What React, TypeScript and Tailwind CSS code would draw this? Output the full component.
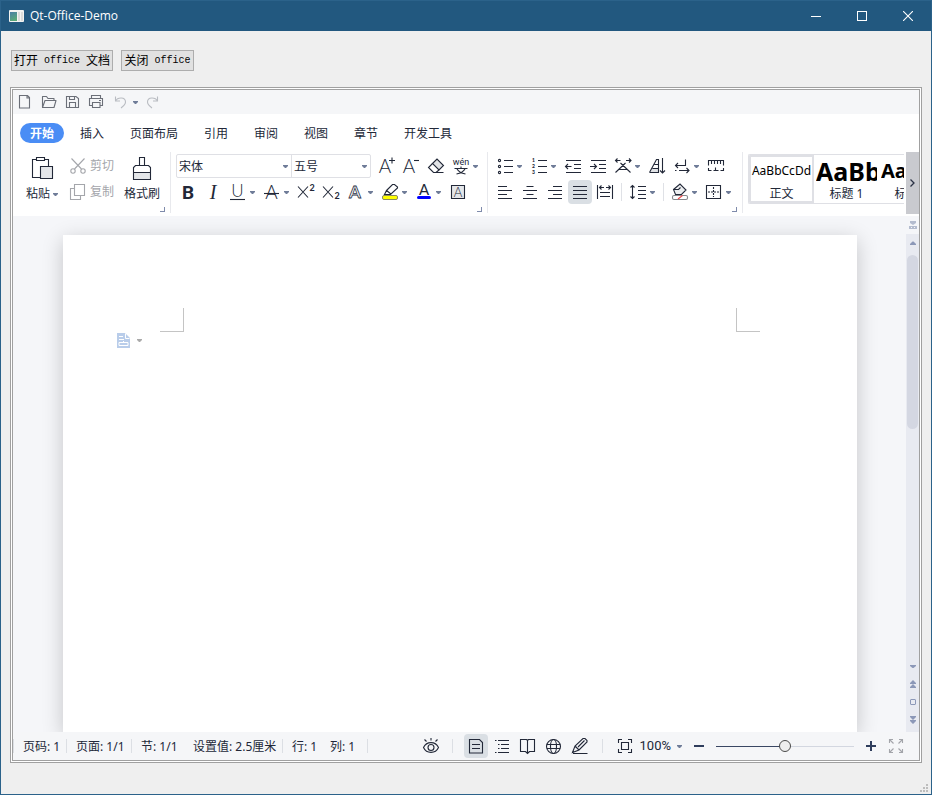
import type { ReactNode } from "react";

const INK = "#2b3245";

function Svg({ children, className = "size-6" }: { children: ReactNode; className?: string }) {
  return (
    <svg viewBox="0 0 24 24" className={`${className} shrink-0`} fill="none" stroke="currentColor" strokeWidth="1.1" aria-hidden="true">
      {children}
    </svg>
  );
}

function Caret({ className = "text-[#6f7c98]" }: { className?: string }) {
  return (
    <svg viewBox="0 0 5 3" className={`h-[3px] w-[5px] shrink-0 ${className}`} fill="currentColor" aria-hidden="true">
      <path d="M0 0h5v1L3 3H2L0 1z" />
    </svg>
  );
}

type ToolProps = { label: string; children: ReactNode; drop?: boolean; active?: boolean };

function Tool({ label, children, drop, active }: ToolProps) {
  return (
    <button
      type="button"
      aria-label={label}
      title={label}
      className={`flex h-6 shrink-0 items-center ${drop ? "w-[33px]" : "w-6"} ${active ? "rounded-sm bg-[#dadfe4]" : ""}`}
    >
      <Svg>{children}</Svg>
      {drop && <Caret />}
    </button>
  );
}

function Letter({ x, y, size, children, weight = 300, family = "Lato, sans-serif" }: {
  x: number; y: number; size: number; children: string; weight?: number; family?: string;
}) {
  return (
    <text x={x} y={y} fontSize={size} fontWeight={weight} fontFamily={family} fill="currentColor" stroke="none" textAnchor="middle">
      {children}
    </text>
  );
}

function Group({ children, className = "" }: { children: ReactNode; className?: string }) {
  return (
    <section className={`relative h-[61px] shrink-0 border-r border-[#e8e9ed] ${className}`}>
      {children}
      <button type="button" aria-label="更多设置" className="absolute right-[5px] bottom-px size-[5px] border-r border-b border-[#7f8bab]" />
    </section>
  );
}

function Combo({ label, options, className }: { label: string; options: string[]; className: string }) {
  return (
    <span className={`relative flex items-center ${className}`}>
      <select aria-label={label} className="h-full w-full appearance-none bg-transparent pt-px pl-0.5 text-xs outline-none">
        {options.map((o) => (
          <option key={o}>{o}</option>
        ))}
      </select>
      <span className="pointer-events-none absolute right-[3px]">
        <Caret />
      </span>
    </span>
  );
}

const Divider = () => <span className="mx-[3px] h-[18px] w-px shrink-0 bg-[#dfe1e6]" />;

function TitleBar() {
  return (
    <header className="flex h-[30px] shrink-0 items-center bg-[#22587f] text-white">
      <svg viewBox="0 0 15 12" className="ml-2 h-3 w-[15px]" aria-hidden="true">
        <defs>
          <linearGradient id="appIcon" x1="0" y1="0" x2="0.4" y2="1">
            <stop offset="0" stopColor="#4a7fa5" />
            <stop offset="1" stopColor="#58a878" />
          </linearGradient>
        </defs>
        <rect width="15" height="12" rx="1" fill="#f3f3f1" />
        <rect x="1" y="2" width="7" height="9" fill="url(#appIcon)" />
        <rect x="9" y="2" width="2" height="9" fill="#dcdcda" />
        <rect x="12" y="2" width="2" height="9" fill="#dcdcda" />
      </svg>
      <h1 className="ml-1.5 flex-1 font-['Open_Sans','Noto_Sans',sans-serif] text-xs">Qt-Office-Demo</h1>
      <button type="button" aria-label="最小化" className="flex h-full w-[46px] items-center justify-center">
        <span className="h-px w-2.5 bg-white" />
      </button>
      <button type="button" aria-label="最大化" className="flex h-full w-[46px] items-center justify-center">
        <span className="size-2.5 border border-white" />
      </button>
      <button type="button" aria-label="关闭" className="flex h-full w-[46px] items-center justify-center">
        <svg viewBox="0 0 10 10" className="size-2.5" stroke="white" strokeWidth="1.1" aria-hidden="true">
          <path d="M0 0l10 10M10 0L0 10" />
        </svg>
      </button>
    </header>
  );
}

const latin = "font-['Liberation_Mono',monospace] text-[10px]";

function DemoButtons() {
  const cls = "flex h-[21px] items-center justify-center whitespace-pre border border-[#adadad] bg-[#e1e1e1] pt-px text-xs text-black";
  return (
    <div className="mt-[19px] flex gap-2 px-px">
      <button type="button" className={`${cls} w-[102px]`}>
        打开<span className={latin}> office </span>文档
      </button>
      <button type="button" className={`${cls} w-[73px]`}>
        关闭<span className={latin}> office</span>
      </button>
    </div>
  );
}

function QuickAccess() {
  return (
    <div className="flex h-6 shrink-0 items-center bg-[#f5f6f8] text-[#6b6f78]">
      <Tool label="新建">
        <path d="M6.500 5.500h8l2 2v10.500h-10zM14 5.500v2.500h2.500" />
      </Tool>
      <Tool label="打开">
        <path d="M5.500 17.500v-11h4l1.500 2h6v2M5.500 17.500l2.500-7h11l-2 7z" strokeLinejoin="round" />
      </Tool>
      <Tool label="保存">
        <path d="M5.500 6.500h9.500l2.500 2v9h-12zM8.500 17.500v-5h6v5M8.500 6.500v3h5v-3" />
      </Tool>
      <Tool label="打印">
        <path d="M6.500 8.500v-3h9v3M7 15.500h-2.500v-7h13v7h-2.500M7.500 12.500h7.500v5h-7.500zM14 10.500h2" />
      </Tool>
      <span className="flex text-[#b9bcc2]">
        <Tool label="撤销" drop>
          <path d="M6.500 6.500v4.500h4.500M6.500 11c2-4 10-4.500 10 1 0 2.500-2 4-4.500 6" />
        </Tool>
        <Tool label="恢复">
          <path d="M15.500 6.500v4.500h-4.500M15.500 11c-2-4-10-4.500-10 1 0 2.500 2 4 4.500 6" />
        </Tool>
      </span>
    </div>
  );
}

const tabs = ["开始", "插入", "页面布局", "引用", "审阅", "视图", "章节", "开发工具"];

function Tabs() {
  return (
    <nav role="tablist" className="flex h-[38px] shrink-0 items-center gap-1.5 pl-[7px]">
      {tabs.map((t, i) => (
        <button
          key={t}
          type="button"
          role="tab"
          aria-selected={i === 0}
          className={`h-5 shrink-0 rounded-full px-2.5 pt-0.5 leading-4 ${i === 0 ? "bg-[#4a8df5] font-bold text-white" : ""}`}
        >
          {t}
        </button>
      ))}
    </nav>
  );
}

function Clipboard() {
  return (
    <Group className="flex w-[158px] gap-1 pl-[9px]">
      <button type="button" className="flex w-10 flex-col items-center pt-1">
        <Svg>
          <path d="M6.500 3.500h-4v18h8M14.500 3.500h4v7" />
          <path d="M6.500 1.500h8v3h-8z" />
          <path d="M10.500 10.500h12v12h-12z" fill="#e4e6e9" />
        </Svg>
        <span className="mt-1.5 flex h-4 items-center gap-[3px]">
          粘贴
          <Caret />
        </span>
      </button>
      <div className="flex w-[52px] flex-col gap-0.5 pt-0.5 text-[#a4a6ab]">
        <button type="button" className="flex h-6 items-center">
          <Svg>
            <path d="M5.500 4.500l10 10.500M18.500 4.500l-10 10.500" />
            <circle cx="7" cy="17" r="2.200" />
            <circle cx="17" cy="17" r="2.200" />
          </Svg>
          剪切
        </button>
        <button type="button" className="flex h-6 items-center">
          <Svg>
            <path d="M8.500 4.500h10v11h-10zM8.500 8.500h-4v11h10v-4" />
          </Svg>
          复制
        </button>
      </div>
      <button type="button" className="flex w-10 flex-col items-center pt-1">
        <Svg>
          <path d="M3.500 16.500h17v7h-17z" fill="#e4e6e9" stroke="none" />
          <path d="M9.500 9.500v-8h5v8M3.500 23.500v-12l2-2h13l2 2v12zM3.500 16.500h17" />
        </Svg>
        <span className="mt-1.5 flex h-4 items-center whitespace-nowrap">格式刷</span>
      </button>
    </Group>
  );
}

function FontGroup() {
  return (
    <Group className="flex w-[317px] flex-col gap-0.5 pt-0.5 pl-[5px]">
      <div className="flex gap-px">
        <div className="mr-0.5 flex h-6 w-[195px] rounded-xs border border-[#dfe0e5]">
          <Combo label="字体" options={["宋体", "黑体", "楷体"]} className="w-[115px] border-r border-[#dfe0e5]" />
          <Combo label="字号" options={["五号", "四号", "小四"]} className="w-[78px]" />
        </div>
        <Tool label="增大字号">
          <Letter x={11} y={19} size={19}>A</Letter>
          <path d="M15 6.500h6M18 3.500v6" />
        </Tool>
        <Tool label="减小字号">
          <Letter x={10} y={19} size={19}>A</Letter>
          <path d="M15 6.500h5" />
        </Tool>
        <Tool label="清除格式">
          <path d="M8.500 9.500l4.500-4.500 6.500 6.500-4.500 4.500z" fill="#e1e3e6" />
          <path d="M8.500 9.500l-4 4 5 5h2.500l3-2.500M9.500 18.500h10" />
        </Tool>
        <Tool label="拼音指南" drop>
          <Letter x={12} y={11} size={9} weight={400} family="Roboto, sans-serif">wén</Letter>
          <path d="M5.500 14.500h13M12 12.500v2M8 15c1.500 2.500 4 4 8.500 5M16 15c-1.500 2.500-4 4-8.500 5" />
        </Tool>
      </div>
      <div className="flex gap-px">
        <Tool label="加粗">
          <Letter x={12} y={19} size={19} weight={700} family="Roboto, sans-serif">B</Letter>
        </Tool>
        <Tool label="倾斜">
          <text x="12" y="19" fontSize="20" fontStyle="italic" fontFamily="'Liberation Serif', serif" fill="currentColor" stroke="none" textAnchor="middle">I</text>
        </Tool>
        <Tool label="下划线" drop>
          <Letter x={11.500} y={17} size={17}>U</Letter>
          <path d="M4 19.500h15" />
        </Tool>
        <Tool label="删除线" drop>
          <Letter x={11.500} y={19} size={19}>A</Letter>
          <path d="M4 13.500h15" />
        </Tool>
        <Tool label="上标">
          <path d="M4 6.500l10 11M14 6.500l-10 11" />
          <Letter x={18} y={11} size={9} weight={700}>2</Letter>
        </Tool>
        <Tool label="下标">
          <path d="M4 6.500l10 11M14 6.500l-10 11" />
          <Letter x={18} y={19} size={9} weight={700}>2</Letter>
        </Tool>
        <Tool label="文字效果" drop>
          <text x="11" y="18" fontSize="17" fontWeight="700" fontFamily="Lato, sans-serif" fill="#ffffff" stroke={INK} strokeWidth="0.8" textAnchor="middle">A</text>
        </Tool>
        <Tool label="突出显示" drop>
          <path d="M8.500 10.500l6-6h2l3 2.500v1l-6.500 6zM8.500 10.500l-2 4h6.500M8.500 10.500l4.500 3.500" />
          <rect x="4.500" y="15.500" width="15" height="4" rx="1.500" fill="#ffff00" stroke="#8a8a60" strokeWidth="1" />
        </Tool>
        <Tool label="字体颜色" drop>
          <Letter x={12} y={15} size={15} weight={400}>A</Letter>
          <rect x="5" y="16" width="14" height="3" rx="1.500" fill="#0000ff" stroke="none" />
        </Tool>
        <Tool label="字符底纹">
          <path d="M5.500 5.500h13v13h-13z" fill="#e4e6e9" />
          <Letter x={12} y={17} size={13}>A</Letter>
        </Tool>
      </div>
    </Group>
  );
}

function ParagraphGroup() {
  return (
    <Group className="flex w-[255px] flex-col gap-0.5 pt-0.5 pl-[5px]">
      <div className="flex gap-px">
        <Tool label="项目符号" drop>
          <path d="M11 6.500h9M11 12.500h9M11 18.500h9" />
          <circle cx="6.500" cy="6.500" r="1.100" />
          <circle cx="6.500" cy="12.500" r="1.100" />
          <circle cx="6.500" cy="18.500" r="1.100" />
        </Tool>
        <Tool label="编号" drop>
          <path d="M11 6.500h9M11 12.500h9M11 18.500h9" />
          <Letter x={6.500} y={8} size={5} weight={900}>1</Letter>
          <Letter x={6.500} y={14} size={5} weight={900}>2</Letter>
          <Letter x={6.500} y={20} size={5} weight={900}>3</Letter>
        </Tool>
        <Tool label="减少缩进量">
          <path d="M5 6.500h15M13 10.500h7M13 14.500h7M5 18.500h15M4.500 12.500h6M7 10l-2.500 2.500 2.500 2.500" />
        </Tool>
        <Tool label="增加缩进量">
          <path d="M5 6.500h15M13 10.500h7M13 14.500h7M5 18.500h15M4 12.500h6M8 10l2.500 2.500-2.500 2.500" />
        </Tool>
        <Tool label="中文版式" drop>
          <path d="M4.500 6.500h5M6.500 4.500l-2 2 2 2M15 6.500h5M18 4.500l2 2-2 2M4.500 18.500l10-9.500M19.500 18.500l-10-9.500M8.500 15.500h7" />
        </Tool>
        <Tool label="排序">
          <path d="M7.500 14.500h6v4h-8z" fill="#e1e3e6" stroke="none" />
          <path d="M4.500 18.500h9v-13h-2l-7 13M9.500 10.500h4M7.500 14.500h6M17.500 4v15M15 16.500l2.500 2.500 2.500-2.500" />
        </Tool>
        <Tool label="换行" drop>
          <path d="M15.500 5.500v6h-10M8 9l-2.500 2.500L8 14M9 16.500h10M16.500 14l2.500 2.500-2.500 2.500M5 16.500h1.500" />
        </Tool>
        <Tool label="制表位">
          <path d="M4.500 11.500v-5h15v5M7.500 7v3M10.500 7v3M13.500 7v3M16.500 7v3M4.500 14v2.500h3M9.500 16.500h2v-3M11.500 16.500h3M16.500 16.500h3V14" />
        </Tool>
      </div>
      <div className="flex items-center gap-px">
        <Tool label="左对齐">
          <path d="M5 6.500h9M5 10.500h14M5 14.500h9M5 18.500h14" />
        </Tool>
        <Tool label="居中对齐">
          <path d="M8.500 6.500h7M5 10.500h14M8.500 14.500h7M5 18.500h14" />
        </Tool>
        <Tool label="右对齐">
          <path d="M10 6.500h9M5 10.500h14M10 14.500h9M5 18.500h14" />
        </Tool>
        <Tool label="两端对齐" active>
          <path d="M5 6.500h14M5 10.500h14M5 14.500h14M5 18.500h14" />
        </Tool>
        <Tool label="分散对齐">
          <path d="M4.500 5v14M19.500 5v14M7 7.500h4M13 7.500h4M8.500 5.500l-2 2 2 2M15.500 5.500l2 2-2 2M7 12.500h10M7 16.500h10" />
        </Tool>
        <Divider />
        <Tool label="行距" drop>
          <path d="M6.500 5.500v13M4.500 7.500l2-2 2 2M4.500 16.500l2 2 2-2M12 6.500h8M12 10.500h8M12 14.500h8M12 18.500h8" />
        </Tool>
        <Divider />
        <Tool label="底纹颜色" drop>
          <path d="M5.500 9.500l6.500-5.500 6 6-4.500 4.500h-6zM5.500 9.500h5l2-2" fill="#eceef0" />
          <rect x="4.500" y="15.500" width="15" height="4" rx="1.500" fill="#ffffff" stroke="#85878c" />
          <path d="M10 19l4.500-3.500" stroke="#f04a4a" />
        </Tool>
        <Tool label="边框" drop>
          <path d="M4.500 5.500h14v13h-14z" />
          <path d="M11.500 7v10M6 12h11" strokeDasharray="2 1" />
        </Tool>
      </div>
    </Group>
  );
}

const styles = [
  { name: "正文", sample: "AaBbCcDd", cls: "text-xs", active: true },
  { name: "标题 1", sample: "AaBb", cls: "text-[25px] leading-[29px] font-bold", active: false },
  { name: "标题 2", sample: "AaBbC", cls: "text-xl font-bold", active: false },
];

function StyleGallery() {
  return (
    <section className="flex h-[62px] min-w-0 flex-1 items-start justify-between pl-[5px]">
      <div className="mt-0.5 mr-0.5 flex h-[50px] min-w-0 flex-1 overflow-hidden rounded-l-xs border-y border-l border-[#dfe0e5]">
        {styles.map((s) => (
          <button
            key={s.name}
            type="button"
            className={`flex w-[65px] shrink-0 flex-col items-center border-2 ${s.active ? "border-[#dfe0e5]" : "border-transparent"}`}
          >
            <span className={`flex h-[29px] w-full items-center overflow-hidden text-black ${s.active ? "justify-center" : ""} ${s.cls}`}>
              {s.sample}
            </span>
            <span className="h-4 pt-px leading-4">{s.name}</span>
          </button>
        ))}
      </div>
      <button type="button" aria-label="更多样式" className="flex h-full w-[13px] shrink-0 items-center justify-center bg-[#c9cacf]">
        <svg viewBox="0 0 5 8" className="h-2 w-[5px]" fill="none" stroke={INK} strokeWidth="1.3" aria-hidden="true">
          <path d="M0.500 0.500L4 4L0.500 7.500" />
        </svg>
      </button>
    </section>
  );
}

function ScrollButton({ label, d, muted }: { label: string; d: string; muted?: boolean }) {
  return (
    <button type="button" aria-label={label} className={`flex h-[18px] w-full shrink-0 items-center justify-center ${muted ? "text-[#b4bccf]" : "text-[#8c98b8]"}`}>
      <svg viewBox="0 0 8 8" className="size-2" fill="currentColor" aria-hidden="true">
        <path d={d} fillRule="evenodd" />
      </svg>
    </button>
  );
}

function DocumentArea() {
  return (
    <main className="flex min-h-0 flex-1">
      <div className="flex min-w-0 flex-1 overflow-hidden bg-[#f5f6f9] pt-[19px] pr-[49px] pl-[50px]">
        <article className="flex-1 bg-white pt-[73px] shadow-[0_5px_20px_rgba(0,0,0,0.2)]">
          <div className="flex justify-between px-[97px]">
            <span className="size-6 border-r border-b border-[#c4c4c4]" />
            <span className="size-6 border-b border-l border-[#c4c4c4]" />
          </div>
          <button type="button" aria-label="粘贴选项" className="mt-px ml-[54px] flex items-center gap-[7px]">
            <svg viewBox="0 0 13 15" className="h-[15px] w-[13px]" aria-hidden="true">
              <path d="M0 0h8l5 5v10H0z" fill="#b9cdea" />
              <path d="M8.500 0.500v5h4M2 3.500h4M2 6.500h5M2 9.500h9v3H2zM6.500 8v1.500" stroke="#ffffff" fill="none" />
            </svg>
            <Caret className="text-[#aaaaaa]" />
          </button>
        </article>
      </div>
      <div className="flex w-[13px] shrink-0 flex-col bg-[#e8eaf1] pb-[3px]">
        <div className="bg-[#f5f6f9]">
          <ScrollButton label="标尺" muted d="M1 0h6v2L4 4 1 2zM0 5h8v3H0zM2 6v1h1V6zM5 6v1h1V6z" />
        </div>
        <ScrollButton label="向上滚动" d="M3.500 2.500h1L7 5v1H1V5z" />
        <div className="mx-px mt-[3px] h-[174px] rounded-full bg-[#d4d7e2]" />
        <div className="flex-1" />
        <ScrollButton label="向下滚动" d="M1 3h6v1L4.500 6h-1L1 4z" />
        <ScrollButton label="上一页" d="M4 0l3 3v1H1V3zM4 4l3 3v1H1V7z" />
        <ScrollButton label="选择浏览对象" d="M2 1h4l1 1v4l-1 1H2L1 6V2zM2 2v4h4V2z" />
        <ScrollButton label="下一页" d="M1 0h6v1L4 4 1 1zM1 4h6v1L4 8 1 5z" />
      </div>
    </main>
  );
}

function StatusBar() {
  const item = "flex h-3.5 shrink-0 items-center whitespace-nowrap border-[#dcdfe4] pt-px pl-[9px]";
  return (
    <footer className="flex h-7 shrink-0 items-center bg-[#f5f6f8]">
      <span className={`${item} w-[54px] border-x`}>页码: 1</span>
      <span className={`${item} w-[65px] border-r`}>页面: 1/1</span>
      <span className={`${item} w-[52px]`}>节: 1/1</span>
      <span className={`${item} w-[99px] border-r`}>设置值: 2.5厘米</span>
      <span className={`${item} w-[38px]`}>行: 1</span>
      <span className={`${item} w-[47px] border-r`}>列: 1</span>
      <span className="flex-1" />
      <Tool label="护眼模式">
        <path d="M4.500 13.500c3-6.500 12-6.500 15 0-3 6.500-12 6.500-15 0zM12 4v2.500M5.500 5.500l2 2M18.500 5.500l-2 2" />
        <circle cx="12" cy="13.500" r="3" />
      </Tool>
      <span className="mr-[11px] ml-[9px] h-3.5 w-px bg-[#dcdfe4]" />
      <span className="flex gap-0.5">
        <Tool label="页面视图" active>
          <path d="M5.500 5.500h10l3 3v10.500h-13zM8 10.500h8M8 14.500h8" />
        </Tool>
        <Tool label="大纲">
          <path d="M5 6.500h1.500M8 6.500h11M8 10.500h1.500M11 10.500h8M8 14.500h1.500M11 14.500h8M5 18.500h1.500M8 18.500h11" />
        </Tool>
        <Tool label="阅读版式">
          <path d="M4.500 5.500h6l1 1 1-1h6v12h-5l-2 2-2-2h-5zM11.500 6.500v12" />
        </Tool>
        <Tool label="Web 版式">
          <circle cx="11.500" cy="12.500" r="7" />
          <ellipse cx="11.500" cy="12.500" rx="3" ry="7" />
          <path d="M5 10.500h13M5 14.500h13" />
        </Tool>
        <Tool label="写作模式">
          <path d="M4.500 18.500l2.500-6.500 8-7.500h2l2 2v1.500l-8 8zM7 12l4 4M10 13l6.500-6.500M5 19.500h14.500" />
        </Tool>
      </span>
      <span className="mx-2.5 h-3.5 w-px bg-[#dcdfe4]" />
      <Tool label="最佳显示比例">
        <path d="M5.500 9v-3.500h3.500M15 5.500h3.500v3.500M18.500 15v3.500h-3.500M9 18.500h-3.500v-3.500M8.500 8.500h7v7h-7z" />
      </Tool>
      <button type="button" className="ml-[3px] flex h-6 items-center gap-1.5 font-['Roboto','Noto_Sans',sans-serif] text-[13px]">
        100%
        <Caret />
      </button>
      <button type="button" aria-label="缩小" className="ml-[5px] flex size-6 items-center justify-center">
        <span className="h-0.5 w-2.5 bg-[#2f3d5c]" />
      </button>
      <input
        type="range"
        aria-label="显示比例"
        min={0}
        max={200}
        defaultValue={100}
        className="ml-[5px] h-6 w-[138px] appearance-none bg-transparent [&::-webkit-slider-runnable-track]:h-px [&::-webkit-slider-runnable-track]:bg-[linear-gradient(to_right,#3a4763_50%,#d3d7e0_50%)] [&::-webkit-slider-thumb]:-mt-1.5 [&::-webkit-slider-thumb]:size-3 [&::-webkit-slider-thumb]:appearance-none [&::-webkit-slider-thumb]:rounded-full [&::-webkit-slider-thumb]:border [&::-webkit-slider-thumb]:border-[#4a4a4a] [&::-webkit-slider-thumb]:bg-[#eeeeee]"
      />
      <button type="button" aria-label="放大" className="ml-[5px] flex size-6 items-center justify-center">
        <svg viewBox="0 0 10 10" className="size-2.5" stroke="#2f3d5c" strokeWidth="2" aria-hidden="true">
          <path d="M0 5h10M5 0v10" />
        </svg>
      </button>
      <span className="mr-[11px] ml-px flex text-[#a3a5aa]">
        <Tool label="全屏显示">
          <path d="M5.500 9v-3.500h3.500M5.500 5.500l4 4M15 5.500h3.500v3.500M18.500 5.500l-4 4M18.500 15v3.500h-3.500M18.500 18.500l-4-4M9 18.500h-3.500v-3.500M5.500 18.500l4-4" />
        </Tool>
      </span>
    </footer>
  );
}

export default function App() {
  return (
    <div className="relative flex h-screen flex-col border border-[#2b628a] bg-[#efefef] font-['Noto_Sans','Noto_Sans_CJK_SC',sans-serif] text-xs text-[#222838]">
      <TitleBar />
      <div className="flex min-h-0 flex-1 flex-col px-[9px] pb-[31px]">
        <DemoButtons />
        <div className="mt-4 flex min-h-0 flex-1 flex-col border-[3px] border-double border-[#a0a0a0] bg-white">
          <QuickAccess />
          <Tabs />
          <div className="flex h-16 shrink-0">
            <Clipboard />
            <FontGroup />
            <ParagraphGroup />
            <StyleGallery />
          </div>
          <DocumentArea />
          <StatusBar />
        </div>
      </div>
      <svg viewBox="0 0 8 8" className="absolute right-[3px] bottom-0.5 size-2" fill="#bdbdbd" aria-hidden="true">
        <path d="M6 0h2v2H6zM3 3h2v2H3zM6 3h2v2H6zM0 6h2v2H0zM3 6h2v2H3zM6 6h2v2H6z" />
      </svg>
    </div>
  );
}
